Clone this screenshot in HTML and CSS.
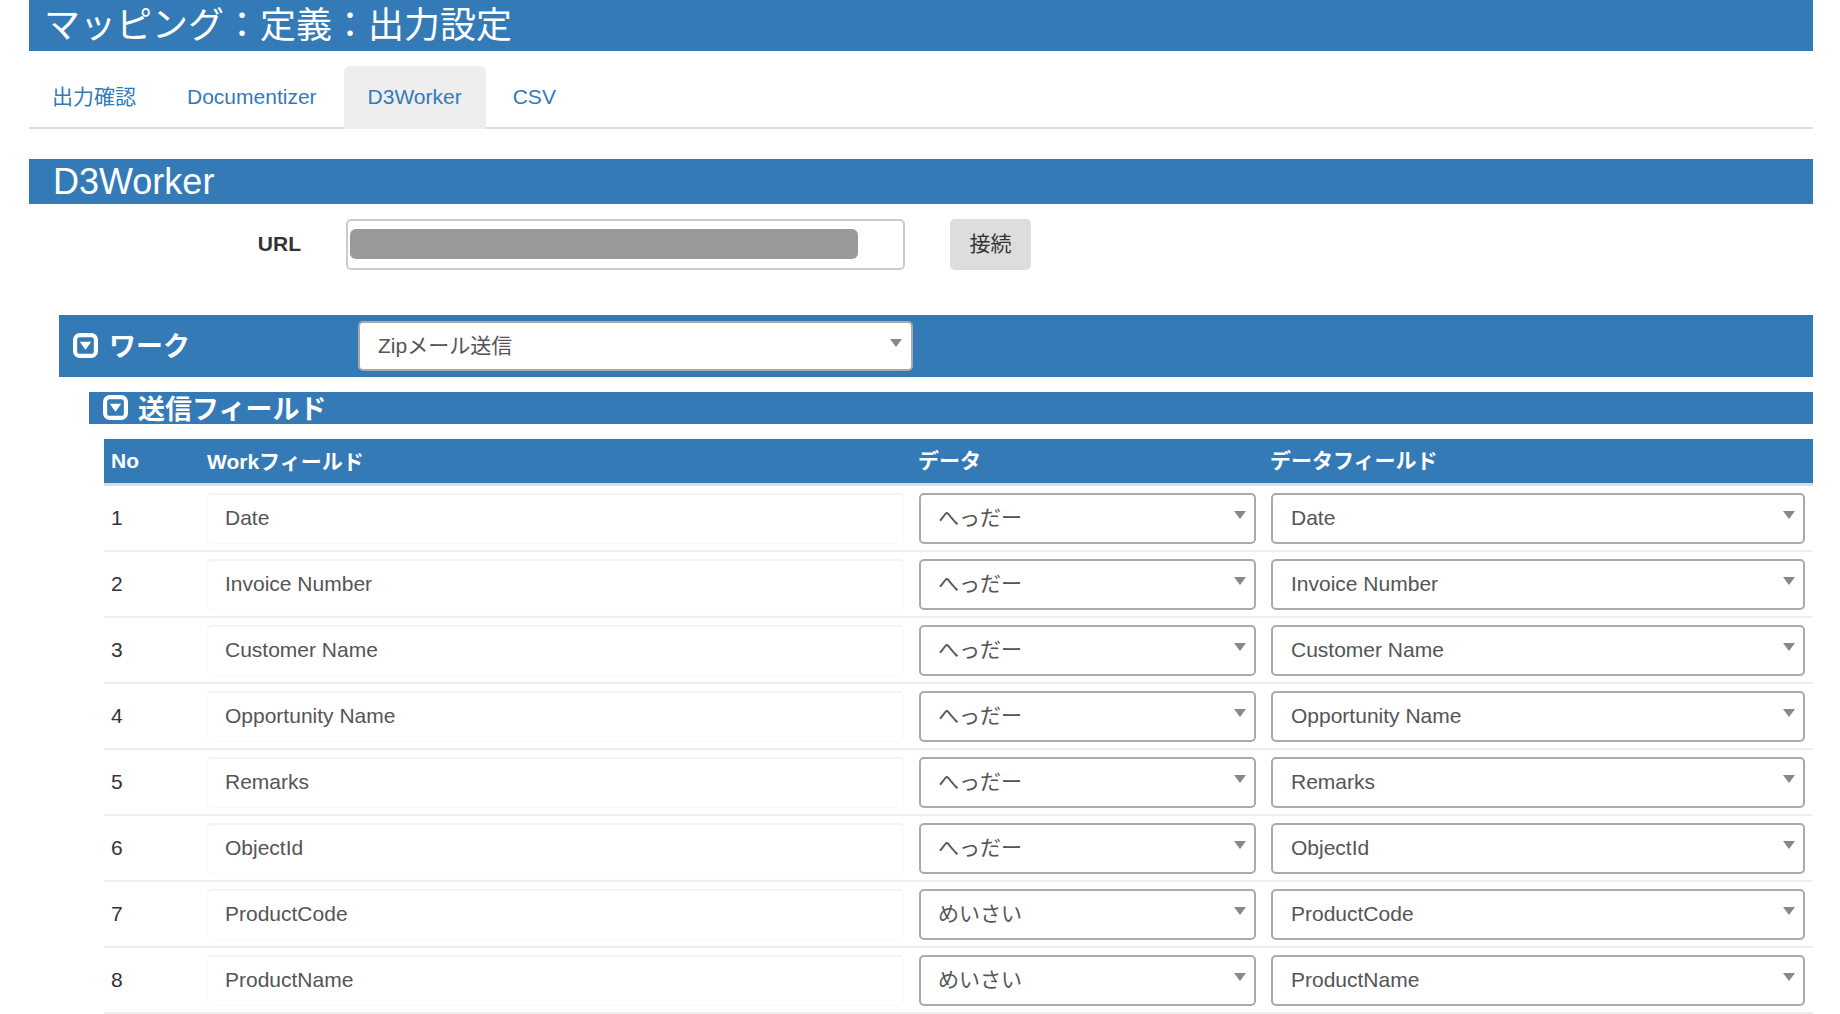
FILE: index.html
```html
<!DOCTYPE html>
<html lang="ja">
<head>
  <meta charset="UTF-8" />
  <title>マッピング&#xFF1A;定義&#xFF1A;出力設定</title>
  <link rel="stylesheet" href="styles.css">
</head>
<body>
  <h1 class="page-title">マッピング&#xFF1A;定義&#xFF1A;出力設定</h1>

  <ul class="tabs">
    <li><a href="#">出力確認</a></li>
    <li><a href="#">Documentizer</a></li>
    <li class="active"><a href="#">D3Worker</a></li>
    <li><a href="#">CSV</a></li>
  </ul>

  <h2 class="section-title">D3Worker</h2>

  <div class="url-row">
    <label class="url-label">URL</label>
    <div class="url-box"><div class="url-mask"></div></div>
    <button class="connect-btn">接続</button>
  </div>

  <div class="work-bar">
    <svg class="toggle" viewBox="0 0 24 24"><rect x="2" y="2" width="20" height="20" rx="4.5" /><polygon points="6.5,8.5 17.5,8.5 12,16" /></svg>
    <span class="work-name">ワーク</span>
    <div class="select-wrap work-select"><select><option>Zipメール送信</option></select></div>
  </div>

  <div class="send-bar">
    <svg class="toggle" viewBox="0 0 24 24"><rect x="2" y="2" width="20" height="20" rx="4.5" /><polygon points="6.5,8.5 17.5,8.5 12,16" /></svg>
    <span class="send-name">送信フィールド</span>
  </div>

  <table class="field-table">
    <thead>
      <tr>
        <th class="col-no">No</th>
        <th class="col-work">Workフィールド</th>
        <th class="col-data">データ</th>
        <th class="col-field">データフィールド</th>
      </tr>
    </thead>
    <tbody>
      <tr>
        <td class="num">1</td>
        <td><div class="field-box">Date</div></td>
        <td><div class="select-wrap data-select"><select><option>へっだー</option></select></div></td>
        <td><div class="select-wrap field-select"><select><option>Date</option></select></div></td>
      </tr>
      <tr>
        <td class="num">2</td>
        <td><div class="field-box">Invoice Number</div></td>
        <td><div class="select-wrap data-select"><select><option>へっだー</option></select></div></td>
        <td><div class="select-wrap field-select"><select><option>Invoice Number</option></select></div></td>
      </tr>
      <tr>
        <td class="num">3</td>
        <td><div class="field-box">Customer Name</div></td>
        <td><div class="select-wrap data-select"><select><option>へっだー</option></select></div></td>
        <td><div class="select-wrap field-select"><select><option>Customer Name</option></select></div></td>
      </tr>
      <tr>
        <td class="num">4</td>
        <td><div class="field-box">Opportunity Name</div></td>
        <td><div class="select-wrap data-select"><select><option>へっだー</option></select></div></td>
        <td><div class="select-wrap field-select"><select><option>Opportunity Name</option></select></div></td>
      </tr>
      <tr>
        <td class="num">5</td>
        <td><div class="field-box">Remarks</div></td>
        <td><div class="select-wrap data-select"><select><option>へっだー</option></select></div></td>
        <td><div class="select-wrap field-select"><select><option>Remarks</option></select></div></td>
      </tr>
      <tr>
        <td class="num">6</td>
        <td><div class="field-box">ObjectId</div></td>
        <td><div class="select-wrap data-select"><select><option>へっだー</option></select></div></td>
        <td><div class="select-wrap field-select"><select><option>ObjectId</option></select></div></td>
      </tr>
      <tr>
        <td class="num">7</td>
        <td><div class="field-box">ProductCode</div></td>
        <td><div class="select-wrap data-select"><select><option>めいさい</option></select></div></td>
        <td><div class="select-wrap field-select"><select><option>ProductCode</option></select></div></td>
      </tr>
      <tr>
        <td class="num">8</td>
        <td><div class="field-box">ProductName</div></td>
        <td><div class="select-wrap data-select"><select><option>めいさい</option></select></div></td>
        <td><div class="select-wrap field-select"><select><option>ProductName</option></select></div></td>
      </tr>
    </tbody>
  </table>
</body>
</html>
```

FILE: styles.css
```css
* {
  box-sizing: border-box;
}
body {
  font-family: "Liberation Sans", "Noto Sans CJK JP", sans-serif;
  font-size: 21px;
  margin: 0;
  padding: 0 27px 0 29px;
  background: #fff;
  color: #333;
}

.page-title {
  margin: 0;
  height: 51px;
  padding-left: 15px;
  background: #337ab7;
  color: #fff;
  font-size: 36px;
  font-weight: 400;
  line-height: 52px;
}

.tabs {
  display: flex;
  gap: 3px;
  list-style: none;
  margin: 15px 0 0;
  padding: 0;
  height: 63px;
  border-bottom: 2px solid #ddd;
}
.tabs li {
  height: 63px;
}
.tabs a {
  display: block;
  height: 63px;
  padding: 0 24px;
  color: #337ab7;
  line-height: 62px;
  text-decoration: none;
  border-radius: 6px 6px 0 0;
}
.tabs li:first-child a {
  padding-left: 23px;
}
.tabs .active a {
  background: #eee;
}

.section-title {
  margin: 30px 0 0;
  height: 45px;
  padding-left: 24px;
  background: #337ab7;
  color: #fff;
  font-size: 36px;
  font-weight: 400;
  line-height: 46px;
}

.url-row {
  display: flex;
  align-items: center;
  margin-top: 15px;
  height: 51px;
}
.url-label {
  width: 272px;
  margin-right: 45px;
  padding-bottom: 2px;
  text-align: right;
  font-weight: bold;
}
.url-box {
  display: flex;
  align-items: center;
  width: 559px;
  height: 51px;
  padding: 0 2px 2px;
  border: 2px solid #ccc;
  border-radius: 5px;
}
.url-mask {
  width: 508px;
  height: 30px;
  background: #999;
  border-radius: 6px;
}
.connect-btn {
  width: 81px;
  height: 51px;
  margin-left: 45px;
  padding: 0 0 6px;
  border: none;
  border-radius: 5px;
  background: #ddd;
  color: #333;
  font-family: inherit;
  font-size: 21px;
}

.work-bar {
  display: flex;
  align-items: center;
  margin: 45px 0 0 30px;
  height: 62px;
  padding-left: 14px;
  background: #337ab7;
  color: #fff;
}
.toggle {
  flex: none;
  width: 25px;
  height: 25px;
  margin-bottom: 2px;
}
.toggle rect {
  fill: none;
  stroke: #fff;
  stroke-width: 4;
}
.toggle polygon {
  fill: #fff;
}
.work-name {
  width: 249px;
  margin-left: 11px;
  padding-bottom: 4px;
  font-size: 27px;
  font-weight: bold;
}
.send-bar {
  display: flex;
  align-items: center;
  margin: 15px 0 0 60px;
  height: 32px;
  padding-left: 14px;
  background: #337ab7;
  color: #fff;
}
.send-name {
  margin-left: 10px;
  padding-bottom: 2px;
  font-size: 27px;
  font-weight: bold;
}

.select-wrap {
  position: relative;
  height: 51px;
}
.select-wrap::after {
  content: "";
  position: absolute;
  top: 18px;
  right: 10px;
  border-left: 6px solid transparent;
  border-right: 6px solid transparent;
  border-top: 8px solid #888;
}
.select-wrap select {
  display: block;
  width: 100%;
  height: 100%;
  padding: 0 30px 2px 18px;
  appearance: none;
  border: 2px solid #aaa;
  border-radius: 5px;
  background: #fff;
  color: #555;
  font-family: inherit;
  font-size: 21px;
}
.work-select {
  width: 555px;
  height: 50px;
}
.work-select::after {
  right: 11px;
}
.data-select {
  width: 337px;
}
.data-select select {
  padding-left: 17px;
}
.field-select {
  width: 534px;
}

.field-table {
  width: 1709px;
  margin: 15px 0 0 75px;
  border-spacing: 0;
  table-layout: fixed;
}
.field-table th {
  height: 47px;
  padding: 0 0 3px;
  border-bottom: 3px solid #ddd;
  background: #337ab7;
  background-clip: padding-box;
  color: #fff;
  text-align: left;
}
.col-no {
  width: 103px;
}
.col-work {
  width: 712px;
}
.col-data {
  width: 352px;
}
.col-field {
  width: 542px;
}
.field-table th.col-no {
  padding-top: 2px;
  padding-bottom: 2px;
  padding-left: 7px;
}
.field-table th.col-data,
.field-table th.col-field {
  padding-bottom: 4px;
  text-indent: -1px;
}
.field-table td {
  height: 66px;
  padding: 7px 0 6px;
  border-bottom: 2px solid #eee;
}
.field-table td.num {
  padding: 6px 0 7px 7px;
  color: #333;
}
.field-box {
  width: 697px;
  height: 51px;
  padding-left: 17px;
  border: 1px solid #f8f8f8;
  border-top: 2px solid #f3f3f3;
  border-radius: 5px;
  color: #555;
  line-height: 45px;
}
```
